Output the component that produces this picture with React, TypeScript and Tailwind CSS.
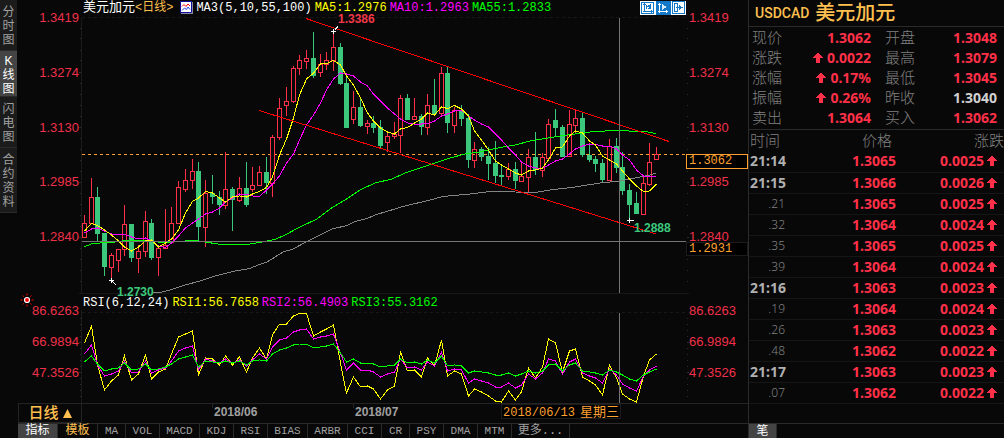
import React from "react";

type Candle = [high: number, top: number, bottom: number, low: number, up: 0 | 1];

const UP = "#ff3048";
const DOWN = "#3cc87c";

const xAt = (i: number) => Math.round(84 + i * 6.73) + 0.5;
const line = (values: number[]) => values.map((y, i) => `${xAt(i)},${y}`).join(" ");

const CANDLES: Candle[] = [
  [215, 223, 237, 237, 1], [178, 197, 223, 223, 1], [187, 197, 234, 242, 0], [233, 233, 267, 276, 0],
  [253, 255, 267, 280, 1], [249, 249, 260, 272, 1], [205, 224, 249, 256, 1], [224, 224, 258, 262, 0],
  [245, 251, 258, 273, 1], [211, 221, 251, 257, 1], [219, 223, 258, 260, 0], [245, 248, 257, 276, 1],
  [209, 245, 248, 248, 1], [207, 223, 242, 242, 1], [181, 187, 223, 223, 1], [169, 180, 189, 192, 1],
  [159, 171, 180, 189, 1], [162, 171, 227, 240, 0], [180, 193, 227, 247, 1], [175, 193, 197, 204, 0],
  [191, 197, 205, 215, 0], [152, 189, 205, 209, 1], [187, 189, 200, 231, 0], [177, 188, 200, 202, 1],
  [162, 188, 205, 207, 0], [167, 185, 189, 192, 1], [166, 172, 185, 185, 1], [157, 172, 183, 194, 0],
  [135, 137, 183, 197, 1], [98, 108, 137, 140, 1], [87, 101, 105, 116, 1], [66, 68, 101, 103, 1],
  [55, 60, 68, 75, 1], [50, 58, 61, 69, 1], [32, 58, 76, 78, 0], [54, 64, 72, 77, 1],
  [52, 60, 64, 70, 1], [31, 47, 60, 71, 1], [43, 47, 84, 85, 0], [75, 83, 128, 128, 0],
  [91, 107, 119, 124, 1], [98, 107, 126, 127, 0], [120, 123, 126, 134, 1], [116, 123, 128, 133, 0],
  [120, 127, 146, 148, 0], [132, 136, 142, 152, 1], [122, 134, 136, 139, 1], [95, 98, 135, 153, 1],
  [94, 98, 120, 120, 0], [98, 116, 119, 119, 1], [114, 116, 127, 135, 0], [94, 105, 127, 135, 1],
  [79, 105, 114, 116, 0], [67, 73, 113, 116, 1], [67, 73, 123, 133, 0], [107, 110, 125, 133, 1],
  [105, 110, 119, 126, 0], [114, 118, 160, 168, 0], [142, 149, 160, 168, 1], [147, 149, 157, 161, 0],
  [147, 156, 164, 180, 0], [141, 163, 176, 183, 0], [165, 175, 177, 185, 0], [163, 169, 176, 180, 1],
  [162, 169, 181, 189, 0], [163, 176, 181, 181, 1], [149, 157, 177, 193, 1], [132, 157, 170, 175, 0],
  [153, 157, 170, 177, 1], [119, 124, 158, 161, 1], [109, 120, 128, 137, 0], [125, 127, 157, 157, 0],
  [110, 124, 156, 156, 1], [110, 118, 125, 133, 1], [113, 118, 155, 157, 0], [143, 155, 160, 162, 0],
  [156, 159, 164, 172, 0], [159, 163, 180, 182, 0], [139, 146, 180, 180, 1], [138, 146, 168, 173, 0],
  [152, 167, 191, 195, 0], [184, 190, 205, 219, 0], [192, 203, 214, 214, 0], [177, 183, 214, 214, 1],
  [143, 162, 184, 186, 1], [147, 154, 159, 159, 1],
];

const MA5 = [
  231, 223.5, 225.5, 230, 235, 241, 247, 251, 247, 241, 240, 247, 243, 239, 230, 213, 201.5, 198, 191.5, 193, 198,
  202, 197, 196, 197, 194, 191.5, 187.5, 177, 155, 139, 118, 95, 79, 73, 64, 63.5, 60.5, 65, 76, 85, 98, 113, 121,
  128, 132, 134, 129, 127.5, 123, 119, 113, 115, 107, 108.5, 105.5, 109, 116, 131, 140, 150, 161, 165, 169, 173,
  175, 171, 170, 168, 160, 148, 147, 136, 131, 133, 141, 145, 156, 160, 164, 171, 179, 186, 191.5, 191, 184,
];

const MA10 = [
  233, 229, 228, 231, 234, 235, 234.5, 237, 239, 238, 241, 246, 247.5, 243, 236, 228, 223, 219, 214, 212, 208, 202,
  198, 194, 194.5, 196, 196.5, 190, 184, 176, 163, 154, 140, 125, 115, 103, 90, 79, 73, 74, 76, 82, 86, 94, 101,
  108, 114, 119, 123, 124, 124, 123.5, 121, 116, 114, 111, 110, 116, 120, 124, 127, 134, 140, 148, 155, 162, 166,
  168, 168.5, 165, 161, 159, 154, 149, 146, 144, 144.5, 146, 146, 149, 155, 160, 170, 176, 177, 176,
];

const MA55 =
  "84,247 91,244 100,243 115,242 125,240.5 150,240.5 158,242 172,242 185,241 190,240.5 196,240.5 205,242 218,244 250,244 262,242 275,239.5 285,235 300,227 317,219 333,207 345,200 360,190 375,183 392,179 405,173 420,168 432,164 450,158 465,154 480,152 500,147.5 515,145 530,141 545,138.5 560,136 575,134 590,132 605,131 625,130.5 633,131.5 648,132 656,133.5";

const MA100 =
  "153,292 162,292 170,290 185,285 200,281 215,276 235,271 250,268.5 258,265 267,262 283,252 293,249 308,241 320,235 332,229 347,225.5 355,221.5 367,218.5 375,215 403,206.5 430,200 443,196.5 470,194 490,191.5 515,192 535,192.5 550,190 575,187 600,183 620,181 635,178 650,175 656,173";

const RSI1 = [
  343, 326, 365, 390, 381, 375, 356, 380, 374, 355, 379, 372, 369, 354, 337, 334, 331, 375, 358, 359, 365, 356, 365,
  357, 372, 358, 348, 359, 335, 324, 324, 316, 313.5, 313.5, 336, 332, 329, 325, 363, 393, 377, 387, 386, 389, 399,
  390, 386, 352, 371, 370, 377, 358, 366, 340, 376, 371, 374, 396, 389, 392, 396, 401, 402, 391, 400, 392, 368,
  378, 367, 339, 343, 372, 351, 349, 377, 381, 385, 395, 365, 378, 394, 399, 402, 376, 360, 354,
];

const RSI2 = [
  354, 345, 365, 376, 374, 371, 361, 373, 372, 361, 373, 370, 368, 361, 351, 348, 346, 370, 359, 361, 363, 359, 363,
  360, 366, 360, 354, 359, 347, 340, 338, 332, 330, 329, 339, 337, 336, 334, 353, 370, 363, 370, 370, 372, 377, 374,
  372, 359, 368, 367, 370, 362, 366, 352, 371, 369, 370, 383, 379, 381, 383, 387, 387, 383, 388, 385, 374, 379, 373,
  359, 361, 374, 362, 359, 373, 376, 378, 383, 369, 375, 384, 388, 391, 376, 370, 366,
];

const RSI3 = [
  362, 356, 364, 371, 369, 368, 363, 370, 369, 364, 370, 369, 367, 364, 359, 357, 355, 367, 361, 362, 363, 361, 363,
  361, 365, 361, 360, 361, 354, 350, 348, 345, 344, 344, 348, 347, 346, 344, 353, 362, 359, 363, 363, 364, 367, 366,
  365, 359, 363, 362, 364, 360, 363, 356, 366, 365, 366, 373, 371, 372, 373, 375, 375, 373, 376, 374, 371, 373, 371,
  365, 364, 371, 365, 363, 371, 372, 373, 375, 370, 372, 375, 379, 381, 375, 372, 369,
];

const VIEWS = ["分时图", "K线图", "闪电图", "合约资料"];
const PRICES = ["1.3419", "1.3274", "1.3130", "1.2985", "1.2840"];
const LEVELS = ["86.6263", "66.9894", "47.3526"];

const TABS: [string, string][] = [
  ["指标", "w-10 bg-[#444] text-[12px] text-white"],
  ["模板", "w-10 text-[12px] text-[#ffc050]"],
  ["MA", "w-7 text-[11px]"],
  ["VOL", "w-[34px] text-[11px]"],
  ["MACD", "w-10 text-[11px]"],
  ["KDJ", "w-[34px] text-[11px]"],
  ["RSI", "w-[34px] text-[11px]"],
  ["BIAS", "w-10 text-[11px]"],
  ["ARBR", "w-10 text-[11px]"],
  ["CCI", "w-[34px] text-[11px]"],
  ["CR", "w-7 text-[11px]"],
  ["PSY", "w-[34px] text-[11px]"],
  ["DMA", "w-[34px] text-[11px]"],
  ["MTM", "w-[34px] text-[11px]"],
  ["更多...", "w-[58px] text-[12px]"],
];

const QUOTES: { label: string; value: string; arrow?: boolean; flat?: boolean }[] = [
  { label: "现价", value: "1.3062" },
  { label: "开盘", value: "1.3048" },
  { label: "涨跌", value: "0.0022", arrow: true },
  { label: "最高", value: "1.3079" },
  { label: "涨幅", value: "0.17%", arrow: true },
  { label: "最低", value: "1.3045" },
  { label: "振幅", value: "0.26%", arrow: true },
  { label: "昨收", value: "1.3040", flat: true },
  { label: "卖出", value: "1.3064" },
  { label: "买入", value: "1.3062" },
];

const TICKS: [string, string, string][] = [
  ["21:14", "1.3065", "0.0025"],
  ["21:15", "1.3066", "0.0026"],
  [".21", "1.3065", "0.0025"],
  [".32", "1.3064", "0.0024"],
  [".35", "1.3065", "0.0025"],
  [".39", "1.3064", "0.0024"],
  ["21:16", "1.3063", "0.0023"],
  [".19", "1.3064", "0.0024"],
  [".26", "1.3063", "0.0023"],
  [".48", "1.3062", "0.0022"],
  ["21:17", "1.3063", "0.0023"],
  [".07", "1.3062", "0.0022"],
];

function UpArrow() {
  return (
    <svg viewBox="0 0 10 10" className="h-2.5 w-2.5 shrink-0" fill={UP} shapeRendering="crispEdges" aria-hidden="true">
      <path d="M4 0h2v1h1v1h1v1h1v1h1v1H7v5H3V5H0V4h1V3h1V2h1V1h1z" />
    </svg>
  );
}

function AxisTicks({ ys, major }: { ys: number[]; major: number[] }) {
  return (
    <g fill="#2c2c2c">
      {ys.map((y) => (
        <React.Fragment key={y}>
          <rect x="80" y={y} width="1" height="1" />
          <rect x="687" y={y} width="1" height="1" />
        </React.Fragment>
      ))}
      {major.map((y) => (
        <React.Fragment key={y}>
          <rect x="79" y={y} width="2" height="1" />
          <rect x="687" y={y} width="2" height="1" />
        </React.Fragment>
      ))}
    </g>
  );
}

function PriceChart() {
  return (
    <svg viewBox="79 14 610 279" className="block h-auto w-full overflow-visible" role="img" aria-label="USDCAD">
      <g shapeRendering="crispEdges" fill="none">
        <path d="M81.5 18V293" stroke="#1c1c1c" />
        <path d="M82 17.5H686" stroke="#181818" strokeDasharray="3 3" />
        <path d="M79 293.5H689" stroke="#181818" />
        <AxisTicks
          ys={[28, 38, 50, 60, 83, 94, 105, 116, 138, 149, 160, 171, 193, 204, 215, 226, 248, 259, 270, 281]}
          major={[72, 127, 182, 237]}
        />
        <path d="M82 154.5H686" stroke="#ffa030" strokeDasharray="3 3" />
        {CANDLES.map(([high, top, bottom, low, up], i) => {
          const x = xAt(i);
          return up ? (
            <g key={i} stroke={UP}>
              <path d={`M${x} ${high}V${top}M${x} ${bottom}V${low}`} />
              <rect x={x - 2} y={top + 0.5} width="4" height={bottom - top} />
            </g>
          ) : (
            <g key={i} fill={DOWN}>
              <rect x={x - 0.5} y={high} width="1" height={low - high} />
              <rect x={x - 2.5} y={top} width="5" height={bottom - top} />
            </g>
          );
        })}
        <polyline points={MA100} stroke="#848484" />
        <polyline points={MA55} stroke="#00ff00" />
        <polyline points={line(MA10)} stroke="#ff00ff" />
        <polyline points={line(MA5)} stroke="#ffff00" />
        <path d="M306 18.5L669 141.5M259 110.5L656 234" stroke="#ff0000" />
        <path d="M82 241.5H686M619.5 18V293" stroke="#747474" />
        <path d="M331 31.5H336M333.5 29V34M335 29.5L338 26.5" stroke="#fff" />
        <path d="M109 280.5H114M111.5 278V283M112 281L116 285" stroke="#fff" />
        <path d="M627 220.5H634M629.5 218V223" stroke="#fff" />
      </g>
      <g className="text-[12px] font-bold">
        <text x="338" y="23" fill="#f03848">1.3386</text>
        <text x="117" y="296" fill={DOWN}>1.2730</text>
        <text x="634" y="232" fill={DOWN}>1.2888</text>
      </g>
    </svg>
  );
}

function RsiChart() {
  return (
    <svg viewBox="79 310 610 93" className="block h-auto w-full" role="img" aria-label="RSI">
      <g shapeRendering="crispEdges" fill="none">
        <path d="M81.5 310V403" stroke="#1c1c1c" />
        <path d="M82 312.5H686" stroke="#181818" strokeDasharray="3 3" />
        <AxisTicks ys={[318, 324, 330, 336, 348, 354, 360, 366, 378, 384, 390, 396]} major={[342, 372]} />
        <polyline points={line(RSI1)} stroke="#ffff00" />
        <polyline points={line(RSI2)} stroke="#ff00ff" />
        <polyline points={line(RSI3)} stroke="#00ff00" />
        <path d="M619.5 313V403" stroke="#747474" />
      </g>
    </svg>
  );
}

function TimeAxis() {
  return (
    <svg viewBox="82 403 666 20" className="block h-5 min-w-0 flex-1" role="img" aria-label="2018">
      <path d="M82 403.5H748M212.5 404V408M353.5 404V408" stroke="#242424" shapeRendering="crispEdges" />
      <g className="text-[12px] font-bold" fill="#a0a0a0">
        <text x="214" y="416">2018/06</text>
        <text x="355" y="416">2018/07</text>
      </g>
      <rect x="501.5" y="404.5" width="119" height="14" fill="#000" stroke="#1c1c1c" shapeRendering="crispEdges" />
      <g fill="#ffa030">
        <text x="503" y="416" className="font-['Liberation_Mono',monospace] text-[12px]">2018/06/13</text>
        <text x="580" y="416" className="text-[13px]">星期三</text>
      </g>
    </svg>
  );
}

export default function App() {
  return (
    <div className="flex min-h-screen bg-[#080808] font-['Liberation_Sans','Noto_Sans_CJK_SC',sans-serif] text-[#a0a0a0]">
      <nav className="w-[18px] shrink-0">
        {VIEWS.map((name) => (
          <button
            key={name}
            className={
              name === "K线图"
                ? "flex w-[17px] justify-center border-b border-[#2a2a2a] bg-[#444] pt-[3px] pb-0 text-[12px] leading-[14px] text-white"
                : "flex w-[17px] justify-center border-b border-[#2a2a2a] bg-[#1b1b1b] pt-[5px] pb-[3px] text-[12px] leading-[14px] text-[#a0a0a0]"
            }
          >
            <span className="w-3.5 text-center break-all">{name}</span>
          </button>
        ))}
      </nav>

      <main className="flex min-w-0 flex-1 flex-col">
        <section className="flex">
          <div className="flex w-[61px] shrink-0 flex-col justify-between pt-2.5 pb-12 text-right text-[13px] leading-4 text-[#f03048]">
            {PRICES.map((p) => (
              <span key={p}>{p}</span>
            ))}
          </div>
          <div className="min-w-0 flex-1">
            <header className="flex h-3.5 items-center gap-[3px] pt-px pl-1 font-['Liberation_Mono','Noto_Sans_CJK_SC',monospace] text-[12px] leading-[14px] whitespace-nowrap">
              <h1 className="text-[13px] text-white">
                美元加元<span className="text-[12px] text-[#ffc050]">&lt;日线&gt;</span>
              </h1>
              <svg viewBox="0 0 13 13" className="ml-1 h-[13px] w-[13px] shrink-0" aria-hidden="true">
                <path d="M1 1h12v12H1z" fill="#8888a0" />
                <path d="M.5 .5h11v11H.5z" fill="#fff" stroke="#1010a0" />
                <path d="M2 5.5L4 3.5L6 5.5L8 3L10 5" fill="none" stroke="#ff0000" />
                <path d="M2 9.5L4.5 7L6.5 8.5L8 6L10 8.5" fill="none" stroke="#2040e0" />
              </svg>
              <span className="text-white">MA3(5,10,55,100)</span>
              <span className="text-[#ffff00]">MA5:1.2976</span>
              <span className="text-[#ff00ff]">MA10:1.2963</span>
              <span className="text-[#00ff00]">MA55:1.2833</span>
              <div className="mr-[3px] ml-auto flex">
                <button aria-label="K" className="bg-white">
                  <svg viewBox="0 0 16 14" className="h-3.5 w-4" shapeRendering="crispEdges" fill="none" stroke="#1478c8">
                    <path d="M1.5 1.5h12v11h-12z" />
                    <path d="M4.5 2v9M3 10.5h10M3 3.5h3M6.5 4v4M10.5 3v5M11.5 9v3" />
                    <path d="M7 5.5h1v-1h1v3h-1v-1" />
                  </svg>
                </button>
                <button aria-label="▶" className="bg-[#1478c8]">
                  <svg viewBox="0 0 15 14" className="h-3.5 w-[15px]" shapeRendering="crispEdges" fill="none" stroke="#fff">
                    <path d="M3.5 2v10M2 10.5h10M2 3.5h3M10.5 9v3" />
                    <path d="M6 3v6l5-3z" fill="#d8ecfc" stroke="none" />
                  </svg>
                </button>
                <button aria-label="→" className="bg-white">
                  <svg viewBox="0 0 15 14" className="h-3.5 w-[15px]" shapeRendering="crispEdges" fill="none" stroke="#1478c8">
                    <path d="M1.5 .5h12v12h-12z" />
                    <path d="M3.5 2.5h3v8h-3zM5 6.5h6" />
                    <path d="M8 4v5l4-2.5z" fill="#1478c8" stroke="none" />
                  </svg>
                </button>
              </div>
            </header>
            <PriceChart />
          </div>
          <div className="relative flex w-[59px] shrink-0 flex-col justify-between pt-2.5 pb-12 text-[13px] leading-4 text-[#f03048]">
            {PRICES.map((p) => (
              <span key={p}>{p}</span>
            ))}
            <output className="absolute top-[154px] right-0 -left-[3px] border border-[#ffa030] bg-black pl-0.5 font-['Liberation_Mono',monospace] text-[12px] leading-[13px] text-[#ffa030]">
              1.3062
            </output>
            <output className="absolute top-[242px] right-0 -left-[3px] border border-[#1c1c1c] bg-black pl-0.5 font-['Liberation_Mono',monospace] text-[12px] leading-[12px] text-[#ffa030]">
              1.2931
            </output>
          </div>
        </section>

        <section className="flex">
          <div className="relative flex w-[61px] shrink-0 flex-col justify-between pt-2.5 pb-[22px] text-right text-[13px] leading-4 text-[#f03048]">
            {LEVELS.map((p) => (
              <span key={p}>{p}</span>
            ))}
            <svg viewBox="0 0 14 14" className="absolute top-0 left-0.5 h-3.5 w-3.5" aria-hidden="true">
              <path
                d="M7 .5v2M7 11.5v2M.5 7h2M11.5 7h2M2.5 2.5l1.2 1.2M10.3 10.3l1.2 1.2M2.5 11.5l1.2-1.2M10.3 3.7l1.2-1.2"
                stroke="#ff0000"
              />
              <circle cx="7" cy="7" r="2.5" fill="#ff0000" stroke="#fff" strokeWidth="1.2" />
            </svg>
          </div>
          <div className="min-w-0 flex-1">
            <div className="flex h-[17px] items-center gap-[3px] pt-1 pl-1 font-['Liberation_Mono',monospace] text-[12px] leading-[13px] whitespace-nowrap">
              <span className="text-white">RSI(6,12,24)</span>
              <span className="text-[#ffff00]">RSI1:56.7658</span>
              <span className="text-[#ff00ff]">RSI2:56.4903</span>
              <span className="text-[#00ff00]">RSI3:55.3162</span>
            </div>
            <RsiChart />
          </div>
          <div className="flex w-[59px] shrink-0 flex-col justify-between pt-2.5 pb-[22px] text-[13px] leading-4 text-[#f03048]">
            {LEVELS.map((p) => (
              <span key={p}>{p}</span>
            ))}
          </div>
        </section>

        <div className="flex">
          <button className="flex h-5 w-16 shrink-0 items-center justify-center gap-1 border border-[#242424] text-[15px] leading-4 font-medium text-[#ffc050]">
            日线
            <svg viewBox="0 0 9 9" className="h-[9px] w-[9px]" fill="#ffc050" aria-hidden="true">
              <path d="M4.5 0L9 9H0z" />
            </svg>
          </button>
          <TimeAxis />
        </div>

        <nav className="mt-auto flex h-[15px] border-t border-[#2a2a2a]">
          {TABS.map(([name, style]) => (
            <button
              key={name}
              className={`shrink-0 border-r border-[#2a2a2a] text-center font-['Liberation_Mono','Noto_Sans_CJK_SC',monospace] leading-[14px] ${style}`}
            >
              {name}
            </button>
          ))}
        </nav>
      </main>

      <aside className="flex w-64 shrink-0 flex-col border-l border-[#2a2a2a]">
        <h2 className="flex h-[27px] items-center gap-1.5 border-b border-[#2a2a2a] pl-1.5 text-[#ffc050]">
          <span className="font-['Roboto',sans-serif] text-[14px] font-medium">USDCAD</span>
          <span className="text-[20px] leading-6 font-medium">美元加元</span>
        </h2>
        <dl className="grid grid-cols-[119fr_112fr] gap-x-3.5 border-b border-[#2a2a2a] pt-px pr-[7px] pb-px pl-[3px]">
          {QUOTES.map((q) => (
            <div key={q.label} className="flex h-5 items-center justify-between">
              <dt className="text-[15px] leading-5 font-light text-[#808080]">{q.label}</dt>
              <dd
                className={
                  q.flat
                    ? "font-['Noto_Sans',sans-serif] text-[14px] leading-5 font-bold text-[#d0d0d0]"
                    : "flex items-center gap-1 font-['Noto_Sans',sans-serif] text-[14px] leading-5 font-bold text-[#ff3048]"
                }
              >
                {q.arrow && <UpArrow />}
                {q.value}
              </dd>
            </div>
          ))}
        </dl>
        <table className="w-full table-fixed border-collapse">
          <colgroup>
            <col className="w-9" />
            <col className="w-[111px]" />
            <col />
          </colgroup>
          <thead className="text-[15px] leading-5 text-[#808080]">
            <tr className="h-[21px]">
              <th className="pl-px text-left font-light whitespace-nowrap">时间</th>
              <th className="pr-1 text-right font-light">价格</th>
              <th className="text-right font-light">涨跌</th>
            </tr>
          </thead>
          <tbody className="font-['Noto_Sans',sans-serif] text-[14px] leading-5 font-bold text-[#ff3048]">
            {TICKS.map(([time, price, change], i) => (
              <tr key={i} className="h-[21px] border-b border-[#161616]">
                <td className={time.startsWith(".") ? "text-right text-[12px] font-light text-[#808080]" : "pl-px text-left text-[#b0b0b0]"}>
                  {time}
                </td>
                <td className="text-right">{price}</td>
                <td className="pr-[7px]">
                  <span className="flex items-center justify-end gap-[3px]">
                    {change}
                    <UpArrow />
                  </span>
                </td>
              </tr>
            ))}
          </tbody>
        </table>
        <div className="mt-auto flex h-[15px] border-t border-[#2a2a2a]">
          <button className="w-7 border-r border-[#2a2a2a] bg-[#444] text-[12px] leading-[14px] text-white">笔</button>
        </div>
      </aside>
    </div>
  );
}
